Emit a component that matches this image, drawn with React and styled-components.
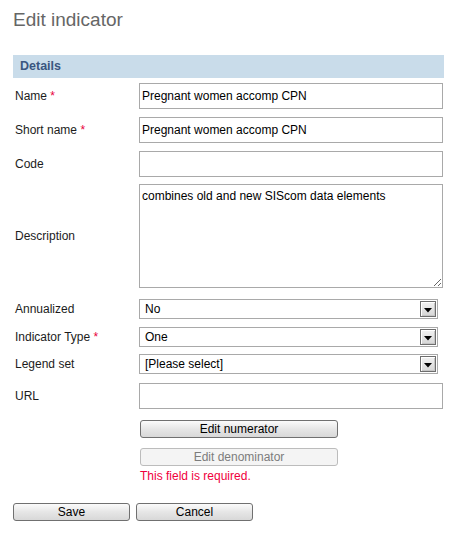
import React from "react";
import styled, { createGlobalStyle } from "styled-components";

const GlobalStyle = createGlobalStyle`
  html, body {
    margin: 0;
    padding: 0;
    background: #fff;
  }
  body {
    font-family: "Liberation Sans", Arial, sans-serif;
    font-size: 12px;
    color: #1c1c1c;
  }
`;

const Page = styled.div`
  width: 431px;
  margin-left: 13px;
  padding-bottom: 12px;
`;

const Title = styled.h1`
  margin: 9px 0 0;
  font-size: 19px;
  line-height: 22px;
  font-weight: normal;
  color: #666;
`;

const SectionHeader = styled.div`
  margin-top: 24px;
  height: 23px;
  line-height: 23px;
  padding-left: 7px;
  background: #c9dcea;
  color: #3a5680;
  font-weight: bold;
  font-size: 12.5px;
`;

const Row = styled.div`
  display: grid;
  grid-template-columns: 126px 1fr;
  align-items: center;
  margin-top: ${(p) => p.$mt}px;
`;

const Label = styled.label`
  padding-left: 2px;
  line-height: 16px;
  color: #1c1c1c;
`;

const Required = styled.span`
  color: #e8003c;
`;

const TextInput = styled.input`
  box-sizing: border-box;
  width: 304px;
  height: 26px;
  margin: 0;
  padding: 0 2px;
  border: 1px solid #a9a9a9;
  font-family: inherit;
  font-size: 12px;
  color: #000;
  background: #fff;
  outline: none;
`;

const TextArea = styled.textarea`
  box-sizing: border-box;
  display: block;
  width: 304px;
  height: 104px;
  margin: 0;
  padding: 4px 2px;
  border: 1px solid #a9a9a9;
  font-family: inherit;
  font-size: 12px;
  line-height: 15px;
  color: #000;
  outline: none;
`;

const SelectBox = styled.div`
  box-sizing: border-box;
  width: 299px;
  height: 20px;
  display: flex;
  align-items: center;
  border: 1px solid #a9a9a9;
  background: #fff;
  padding-left: 5px;
  padding-right: 1px;
`;

const SelectValue = styled.span`
  flex: 1;
  font-size: 12px;
  color: #000;
  white-space: nowrap;
`;

const ArrowButton = styled.span`
  box-sizing: border-box;
  width: 16px;
  height: 16px;
  display: flex;
  align-items: center;
  justify-content: center;
  border: 1px solid #6e6e6e;
  box-shadow: inset 1px 1px 0 #fff, inset -1px -1px 0 #c6c6c6;
  background: linear-gradient(#f2f2f2, #d6d6d6);
  padding-top: 3px;
`;

const ButtonStack = styled.div`
  display: flex;
  flex-direction: column;
  align-items: flex-start;
  padding-left: 127px;
`;

const Button = styled.button`
  box-sizing: border-box;
  width: ${(p) => p.$w}px;
  height: 18px;
  margin: ${(p) => p.$mt || 0}px 0 0;
  padding: 0;
  border: 1px solid ${(p) => (p.disabled ? "#bcbcbc" : "#707070")};
  border-radius: 3px;
  background: ${(p) =>
    p.disabled ? "#f4f4f4" : "linear-gradient(#fbfbfb, #e6e6e6 50%, #d8d8d8)"};
  color: ${(p) => (p.disabled ? "#7c7c7c" : "#000")};
  font-family: inherit;
  font-size: 12px;
  line-height: 16px;
  cursor: default;
`;

const ErrorText = styled.div`
  margin-top: 2px;
  line-height: 16px;
  color: #f0003c;
`;

const Footer = styled.div`
  display: flex;
  gap: 6px;
  margin-top: 19px;
`;

const Arrow = () => (
  <svg width="8" height="5" viewBox="0 0 8 5">
    <path d="M0 0 H8 L4 4.5 Z" fill="#000" />
  </svg>
);

const Select = ({ value }) => (
  <SelectBox>
    <SelectValue>{value}</SelectValue>
    <ArrowButton>
      <Arrow />
    </ArrowButton>
  </SelectBox>
);

export default function App() {
  return (
    <>
      <GlobalStyle />
      <Page>
        <Title>Edit indicator</Title>
        <SectionHeader>Details</SectionHeader>

        <Row $mt={5}>
          <Label>
            Name <Required>*</Required>
          </Label>
          <TextInput defaultValue="Pregnant women accomp CPN" />
        </Row>
        <Row $mt={8}>
          <Label>
            Short name <Required>*</Required>
          </Label>
          <TextInput defaultValue="Pregnant women accomp CPN" />
        </Row>
        <Row $mt={8}>
          <Label>Code</Label>
          <TextInput defaultValue="" />
        </Row>
        <Row $mt={7}>
          <Label>Description</Label>
          <TextArea defaultValue="combines old and new SIScom data elements" />
        </Row>
        <Row $mt={11}>
          <Label>Annualized</Label>
          <Select value="No" />
        </Row>
        <Row $mt={8}>
          <Label>
            Indicator Type <Required>*</Required>
          </Label>
          <Select value="One" />
        </Row>
        <Row $mt={7}>
          <Label>Legend set</Label>
          <Select value="[Please select]" />
        </Row>
        <Row $mt={9}>
          <Label>URL</Label>
          <TextInput defaultValue="" />
        </Row>

        <ButtonStack>
          <Button $w={198} $mt={11}>
            Edit numerator
          </Button>
          <Button $w={198} $mt={10} disabled>
            Edit denominator
          </Button>
          <ErrorText>This field is required.</ErrorText>
        </ButtonStack>

        <Footer>
          <Button $w={117}>Save</Button>
          <Button $w={117}>Cancel</Button>
        </Footer>
      </Page>
    </>
  );
}
